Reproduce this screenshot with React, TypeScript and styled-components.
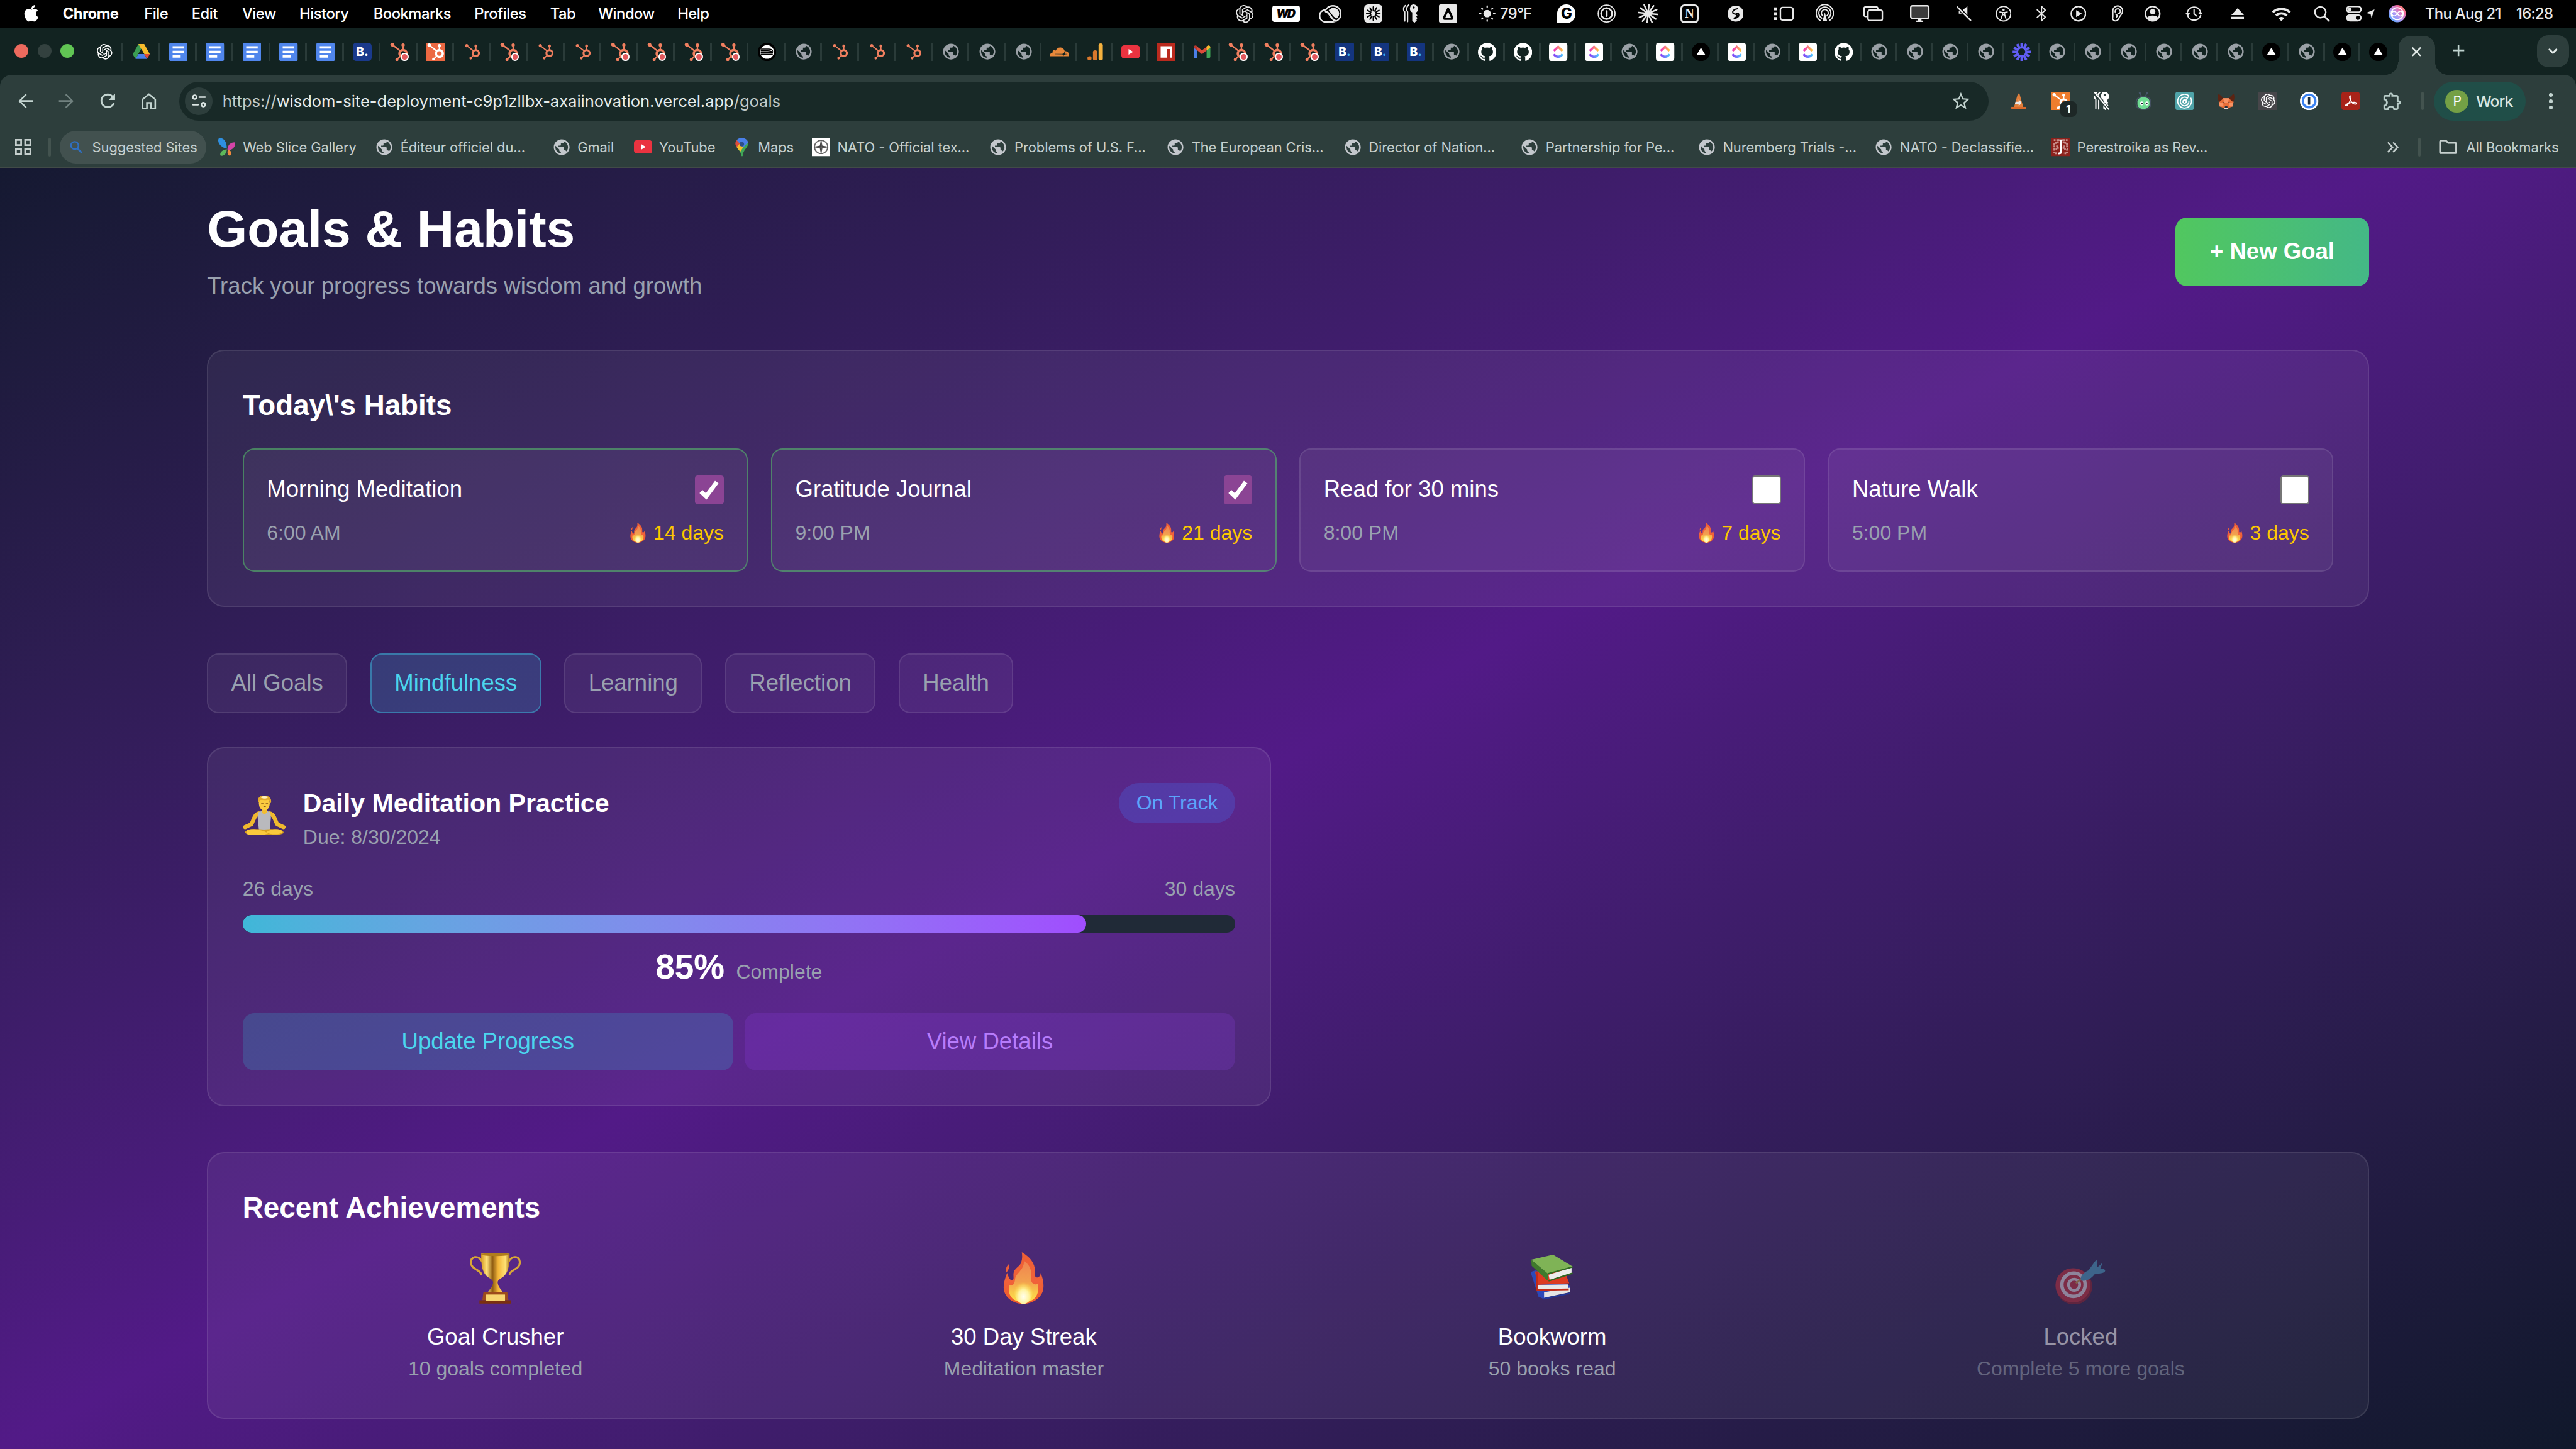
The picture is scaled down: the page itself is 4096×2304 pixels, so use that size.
import React from "react";
import styled, { createGlobalStyle, css } from "styled-components";
import { SiOpenai, SiHubspot, SiGithub, SiCloudflare } from "react-icons/si";
import { FaApple } from "react-icons/fa";
import { MdPublic, MdOutlineExtension, MdRefresh, MdStarBorder } from "react-icons/md";

/* 1rem = 10 design units on a 4480-unit-wide desktop */
const GlobalStyle = createGlobalStyle`
  html { font-size: calc(100vw / 448); }
  body { margin: 0; background: #000; overflow: hidden; }
  *, *::before, *::after { box-sizing: border-box; }
  svg { display: block; flex: none; }
`;

const UI = `Inter, "Liberation Sans", sans-serif`;
const PAGE = `"Liberation Sans", Arial, sans-serif`;
const C = { strip: "#122321", bar: "#2d3e3c", omni: "#182927", ink: "#c6d0ce", muted: "#99a1af" };

const Desktop = styled.div`
  width: 448rem;
  height: 252rem;
  display: flex;
  flex-direction: column;
  overflow: hidden;
  font-family: ${UI};
`;

/* ---------- generic icon ---------- */
const Glyph = styled.svg<{ $w: number; $h?: number }>`
  width: ${(p) => p.$w / 10}rem;
  height: ${(p) => (p.$h ?? p.$w) / 10}rem;
`;
const Slot = styled.span<{ $w: number; $c?: string }>`
  display: flex;
  flex: none;
  width: ${(p) => p.$w / 10}rem;
  color: ${(p) => p.$c ?? "inherit"};
  svg { width: 100%; height: auto; }
`;

/* ---------- macOS menu bar ---------- */
const MenuBar = styled.div`
  height: 4.8rem;
  flex: none;
  display: flex;
  align-items: center;
  padding: 0 3.7rem 0 4rem;
  background: #000;
  color: #fff;
  font-size: 2.6rem;
`;
const AppleLogo = styled(FaApple)`
  width: 2.8rem;
  height: 3.3rem;
  margin-right: 4.1rem;
  position: relative;
  top: -0.1rem;
`;
const MenuItem = styled.span<{ $w: number; $bold?: boolean }>`
  width: ${(p) => p.$w / 10}rem;
  margin-right: 4.27rem;
  white-space: nowrap;
  letter-spacing: -0.055rem;
  font-weight: ${(p) => (p.$bold ? 700 : 500)};
`;
const StatusArea = styled.div`
  margin-left: auto;
  display: flex;
  align-items: center;
  color: #e8e8e8;
`;
const Status = styled.span<{ $gap: number; $w?: number }>`
  margin-left: ${(p) => p.$gap / 10}rem;
  width: ${(p) => (p.$w ? `${p.$w / 10}rem` : "auto")};
  flex: none;
  display: flex;
  justify-content: center;
  white-space: nowrap;
  letter-spacing: -0.07rem;
  font-weight: 500;
`;
const WdBadge = styled.span`
  width: 4.8rem;
  height: 2.8rem;
  border-radius: 0.4rem;
  background: #fff;
  color: #000;
  font: italic 900 2rem/2.8rem ${UI};
  letter-spacing: -0.25rem;
  text-align: center;
  padding-right: 0.3rem;
`;
const GBadge = styled.span`
  width: 3.2rem;
  height: 3.2rem;
  border-radius: 50% 50% 50% 0;
  background: #fff;
  color: #000;
  font: 800 2.6rem/3.2rem ${UI};
  text-align: center;
  letter-spacing: 0;
`;
const NBadge = styled.span`
  width: 3.2rem;
  height: 3.2rem;
  border: 3px solid #e8e8e8;
  border-radius: 0.7rem;
  font: 700 2.2rem/2.6rem "Liberation Serif", serif;
  text-align: center;
  letter-spacing: 0;
`;

const rays = (n: number, r1: number, r2: number, o = 0) =>
  Array.from({ length: n }, (_, i) => {
    const a = o + (i * 2 * Math.PI) / n;
    return `M${16 + r1 * Math.cos(a)} ${16 + r1 * Math.sin(a)}L${16 + r2 * Math.cos(a)} ${16 + r2 * Math.sin(a)}`;
  }).join("");

const line = { fill: "none", stroke: "currentColor", strokeWidth: 2.6, strokeLinecap: "round", strokeLinejoin: "round" } as const;

const CreativeCloud = () => (
  <Glyph $w={40} $h={31} viewBox="0 0 40 31">
    <g fill="currentColor"><circle cx="24.500" cy="15.300" r="15.300" /><circle cx="12" cy="19" r="12" /><path d="M12 26h13v4.600H12z" /></g>
    <g fill="#000"><circle cx="24.500" cy="15.300" r="12.700" /><circle cx="12" cy="19" r="9.400" /><path d="M12 24h12v4H12z" /></g>
    <circle cx="25.500" cy="15" r="10" fill="currentColor" />
    <path d="M12 12c8 0 8 14 18 14" fill="none" stroke="#000" strokeWidth="7" />
    <path d="M12 11.500c7 0 9 14.500 17 16" fill="none" stroke="currentColor" strokeWidth="3.200" strokeLinecap="round" />
  </Glyph>
);
const Keys = ({ slash = false }: { slash?: boolean }) => (
  <Glyph $w={slash ? 32 : 28} $h={32} viewBox="0 0 28 32">
    <path {...line} strokeWidth={2.2} d="M5 2C1 5 1 11 4 13v16M11 1C7 4 6 10 9 13v17" />
    <path fill="currentColor" d="M19 0c5 0 8 4 8 8 0 3-1.500 5-3 6v3l2 2-2 2 2 3-2 2 1 2-4 4-4-3V14c-2-1-4-3-4-6 0-4 2-8 6-8z" />
    <circle cx="19.500" cy="5.500" r="2" fill={slash ? C.bar : "#000"} />
    {slash && <path d="M0 1l27 30" stroke={C.bar} strokeWidth="5" />}
    {slash && <path d="M1 0l26 31" stroke="#fff" strokeWidth="2.200" />}
  </Glyph>
);
const OneRing = () => (
  <Glyph $w={32} viewBox="0 0 32 32">
    <circle {...line} strokeWidth={2} cx="16" cy="16" r="14.700" />
    <circle {...line} strokeWidth={3} cx="16" cy="16" r="9.500" />
    <path {...line} strokeWidth={3.500} d="M16 12v8" />
  </Glyph>
);
const ControlCenter = () => (
  <Glyph $w={28} viewBox="0 0 28 28">
    <rect {...line} x="1.500" y="1.500" width="25" height="10" rx="5" />
    <circle cx="7" cy="6.500" r="3" fill="currentColor" />
    <rect x="0.500" y="15" width="27" height="12.500" rx="6.200" fill="currentColor" />
    <circle cx="21" cy="21.200" r="3.600" fill="#000" />
  </Glyph>
);
const Siri = () => (
  <Glyph $w={30} viewBox="0 0 30 30">
    <defs>
      <linearGradient id="siri" x1="0" y1="1" x2="1" y2="0">
        <stop offset="0" stopColor="#3aa9ff" />
        <stop offset="0.450" stopColor="#b59af5" />
        <stop offset="0.750" stopColor="#f2679a" />
        <stop offset="1" stopColor="#ffb03a" />
      </linearGradient>
    </defs>
    <circle cx="15" cy="15" r="15" fill="url(#siri)" />
    <circle cx="15" cy="15" r="10.500" fill="none" stroke="#fff" strokeWidth="2" />
    <path d="M5 15c3-6 6-5 10 0s7 6 10 0c-3-6-6-5-10 0s-7 6-10 0z" fill="none" stroke="#fff" strokeWidth="1.800" />
  </Glyph>
);

type StatusEntry = [gap: number, w: number, node: React.ReactNode];
const STATUS: StatusEntry[] = [
  [0, 32, <Slot $w={31}><SiOpenai /></Slot>],
  [32, 48, <WdBadge>WD</WdBadge>],
  [33, 40, <CreativeCloud />],
  [39, 32, <Glyph $w={32} viewBox="0 0 32 32"><rect width="32" height="32" rx="7" fill="currentColor" /><path d={rays(12, 5, 11.5)} stroke="#000" strokeWidth="2.400" strokeLinecap="round" /></Glyph>],
  [35, 28, <Keys />],
  [35, 32, <Glyph $w={32} viewBox="0 0 32 32"><rect width="32" height="32" rx="3" fill="currentColor" /><path d="M16 8l7 15c.4 1-.2 2-1 2H10c-.8 0-1.400-1-1-2z" fill="none" stroke="#000" strokeWidth="4" strokeLinejoin="round" /></Glyph>],
  [37, 30, <Glyph $w={30} viewBox="0 0 32 32"><circle cx="16" cy="16" r="7" fill="currentColor" /><path d={rays(8, 12, 14)} {...line} /></Glyph>],
  [7, 56, "79°F"],
  [44, 32, <GBadge>G</GBadge>],
  [38, 32, <OneRing />],
  [40, 32, <Glyph $w={34} viewBox="0 0 32 32"><path d={rays(12, 1, 15.5, 0.1)} {...line} /></Glyph>],
  [40, 32, <NBadge>N</NBadge>],
  [50, 28, <Glyph $w={28} viewBox="0 0 28 28"><circle cx="14" cy="14" r="14" fill="currentColor" /><path d="M17 5.500c-6 1-8.500 4-8 7 .5 3.500 8 1 7.500 5-.2 2-2 3-4 3.200M11.500 22.500c6-1 8.500-4 8-7-.3-2-2.500-2.500-4.500-2.300" fill="none" stroke="#000" strokeWidth="2.200" strokeLinecap="round" /></Glyph>],
  [52, 36, <Glyph $w={36} $h={26} viewBox="0 0 36 26"><rect {...line} x="12" y="2" width="22" height="22" rx="4" /><path fill="currentColor" d="M1 2h5v5H1zM1 10.500h5v5H1zM1 19h5v5H1z" /></Glyph>],
  [37, 32, <Glyph $w={32} viewBox="0 0 32 32"><g {...line} strokeWidth={2.200}><path d="M8 28A15 15 0 1 1 24 28M10.500 24A10.500 10.500 0 1 1 21.500 24M12.500 20a6 6 0 1 1 7 0" /></g><path fill="currentColor" d="M16 14l4 15h-8z" /></Glyph>],
  [50, 36, <Glyph $w={36} $h={28} viewBox="0 0 36 28"><path {...line} d="M8 19H5a3 3 0 0 1-3-3V5a3 3 0 0 1 3-3h18a3 3 0 0 1 3 3v1" /><rect {...line} x="9" y="8" width="25" height="18" rx="3" /></Glyph>],
  [46, 36, <Glyph $w={34} $h={30} viewBox="0 0 34 30"><rect x="1.300" y="1.300" width="31.400" height="22" rx="3" fill="#3c3c3c" stroke="currentColor" strokeWidth="2.600" /><path fill="currentColor" d="M14 24h6v3h3v2.500H11V27h3z" /></Glyph>],
  [44, 28, <Glyph $w={28} viewBox="0 0 28 28"><path fill="currentColor" d="M20 1v22L11 14H5V9h5z" /><path d="M3 2l22 24" stroke="#000" strokeWidth="6" /><path {...line} d="M2.500 2.500l23 23" /></Glyph>],
  [41, 28, <Glyph $w={28} viewBox="0 0 28 28"><circle {...line} strokeWidth={2.200} cx="14" cy="14" r="12.700" /><circle cx="14" cy="7.500" r="2" fill="currentColor" /><path {...line} strokeWidth={2} d="M7.500 11l4.500 1v4l-2 6M20.500 11L16 12v4l2 6M12.500 12h3v4h-3z" /></Glyph>],
  [42, 20, <Glyph $w={20} $h={30} viewBox="0 0 20 30"><path {...line} strokeWidth={2.200} d="M2.500 8.500L16.500 21 10 27.500v-25L16.500 9 2.500 21.500" /></Glyph>],
  [40, 28, <Glyph $w={28} viewBox="0 0 28 28"><circle {...line} cx="14" cy="14" r="12.500" /><path fill="currentColor" d="M10 8l10 6-10 6z" /></Glyph>],
  [41, 24, <Glyph $w={24} $h={30} viewBox="0 0 24 30"><path {...line} strokeWidth={2.300} d="M5 20V10a8.500 8.500 0 0 1 17 0c0 7-5 8-6 12-1 5-8 8-11 3-1-2 0-3 0-5M9 12c0-7 9-7 9-1 0 3-2 4-4 4M10 16c3 1 3 4 1 5" /></Glyph>],
  [37, 28, <Glyph $w={28} viewBox="0 0 28 28"><circle {...line} cx="14" cy="14" r="12.500" /><circle cx="14" cy="10.500" r="4.800" fill="currentColor" /><path fill="currentColor" d="M4.500 21c3-5 16-5 19 0-4 6-15 6-19 0z" /></Glyph>],
  [42, 32, <Glyph $w={30} viewBox="0 0 30 30"><path {...line} strokeWidth={2.300} d="M3.500 12A12 12 0 0 1 26 11M26.500 18A12 12 0 0 1 4 19M15 8v7l4 4" /><path fill="currentColor" d="M0 14l4 6 4-6zM22 16l4-6 4 6z" /></Glyph>],
  [47, 24, <Glyph $w={24} $h={20} viewBox="0 0 24 20"><path fill="currentColor" d="M12 0l11 12H1zM1 15h22v4.500H1z" /></Glyph>],
  [48, 34, <Glyph $w={34} $h={25} viewBox="0 0 34 25"><g {...line} strokeWidth={4.200} strokeLinecap="butt"><path d="M2 9.500a21.500 21.500 0 0 1 30 0M7.500 15a14 14 0 0 1 19 0" /></g><path fill="currentColor" d="M17 25l-5-5.500a7.500 7.500 0 0 1 10 0z" /></Glyph>],
  [39, 28, <Glyph $w={28} viewBox="0 0 28 28"><circle {...line} cx="11.500" cy="11.500" r="9.500" /><path {...line} strokeWidth={3} d="M18.500 18.500l8 8" /></Glyph>],
  [28, 28, <ControlCenter />],
  [7, 14, <Glyph $w={15} viewBox="0 0 14 14"><path fill="currentColor" d="M14 0L9 14 7.500 7.500 0 6z" /></Glyph>],
  [25, 30, <Siri />],
];
const MENU: [string, number][] = [["Chrome", 99], ["File", 40], ["Edit", 45], ["View", 57], ["History", 86], ["Bookmarks", 133], ["Profiles", 89], ["Tab", 41], ["Window", 95], ["Help", 54]];

/* ---------- browser tab strip ---------- */
const TabStrip = styled.div`
  height: 8.2rem;
  flex: none;
  display: flex;
  align-items: center;
  background: ${C.strip};
`;
const Lights = styled.div`
  width: 15rem;
  padding-left: 2.55rem;
  display: flex;
  gap: 1.6rem;
  flex: none;
`;
const Light = styled.i<{ $c: string }>`
  width: 2.4rem;
  height: 2.4rem;
  border-radius: 50%;
  background: ${(p) => p.$c};
`;
const Tab = styled.div<{ $w: number; $last?: boolean }>`
  width: ${(p) => p.$w / 10}rem;
  height: 3.2rem;
  margin-top: 0.2rem;
  flex: none;
  display: flex;
  align-items: center;
  justify-content: center;
  border-right: 3px solid ${(p) => (p.$last ? "transparent" : "#2a3b39")};
  padding-left: 3px;
`;
const ActiveTab = styled.div`
  position: relative;
  align-self: flex-end;
  width: 6.4rem;
  height: 6.8rem;
  margin-left: 0.4rem;
  flex: none;
  display: flex;
  align-items: center;
  justify-content: center;
  padding-bottom: 1.2rem;
  border-radius: 2rem 2rem 0 0;
  background: ${C.bar};
  color: #e3ebe9;
  &::before, &::after {
    content: "";
    position: absolute;
    bottom: 0;
    width: 2.2rem;
    height: 2.2rem;
  }
  &::before { right: 100%; background: radial-gradient(circle at 0 0, transparent 2.15rem, ${C.bar} 2.2rem); }
  &::after { left: 100%; background: radial-gradient(circle at 100% 0, transparent 2.15rem, ${C.bar} 2.2rem); }
`;
const NewTab = styled.div`
  width: 8.2rem;
  padding-bottom: 0.2rem;
  display: flex;
  justify-content: center;
  color: #c0d4d0;
`;
const TabSearch = styled.div`
  margin-left: auto;
  margin-right: 1.2rem;
  width: 5.6rem;
  height: 5.6rem;
  border-radius: 2rem;
  background: ${C.bar};
  color: #e3ebe9;
  display: flex;
  align-items: center;
  justify-content: center;
`;
const HubWrap = styled.span`
  position: relative;
  display: flex;
  width: 3.2rem;
  color: #f07f5f;
  svg { width: 3.2rem; height: 3.2rem; }
  &::after {
    content: "";
    position: absolute;
    right: -0.1rem;
    bottom: 0;
    width: 1.4rem;
    height: 1.4rem;
    border-radius: 50%;
    background: #e2585d;
    border: 2px solid #fff;
  }
`;
const Tile = styled.span<{ $bg: string; $r?: number; $c?: string }>`
  width: 3.2rem;
  height: 3.2rem;
  flex: none;
  border-radius: ${(p) => (p.$r ?? 0) / 10}rem;
  background: ${(p) => p.$bg};
  color: ${(p) => p.$c ?? "#fff"};
  display: flex;
  align-items: center;
  justify-content: center;
`;
const BLetter = styled.b`
  font: 800 2.1rem/1 ${UI};
  color: #fff;
  i { font-style: normal; color: #39a9f0; }
`;

const Docs = () => (
  <Glyph $w={32} viewBox="0 0 32 32"><rect width="32" height="32" rx="3" fill="#5086ec" /><path fill="#fff" d="M6 6h20v4H6zM6 14h20v4H6zM6 22h14v4H6z" /></Glyph>
);
const Drive = () => (
  <Glyph $w={30} $h={27} viewBox="0 0 30 27">
    <path fill="#3b9c52" d="M10 0h10L5 26 0 18z" />
    <path fill="#f6bb2c" d="M10 0h10l10 18H20z" />
    <path fill="#4a7fe8" d="M5 26l5-8.500h10L25 26z" />
    <path fill="#dd4b3a" d="M20 17.500h10L25 26z" />
    <path fill={C.strip} d="M15 8.500l5.200 9H9.800z" />
  </Glyph>
);
const Booking = ({ alt = false }: { alt?: boolean }) => (
  <Tile $bg={alt ? "#14357f" : "#1a3a8c"} $r={alt ? 2 : 6}><BLetter>B{alt ? <i>.</i> : "."}</BLetter></Tile>
);
const Globe = ({ c = "#9aa0a6" }: { c?: string }) => <Slot $w={33} $c={c}><MdPublic /></Slot>;
const Hub = () => <Slot $w={27} $c="#f07f5f"><SiHubspot /></Slot>;
const HubDot = () => <HubWrap><SiHubspot /></HubWrap>;
const YouTubeIcon = () => (
  <Glyph $w={32} $h={23} viewBox="0 0 32 23"><rect width="32" height="23" rx="5" fill="#ea3340" /><path fill="#fff" d="M12.500 6.500l8 5-8 5z" /></Glyph>
);
const ClickUp = () => (
  <Glyph $w={32} viewBox="0 0 32 32">
    <defs>
      <linearGradient id="cu1"><stop offset="0" stopColor="#f02fc2" /><stop offset="1" stopColor="#ffc53d" /></linearGradient>
      <linearGradient id="cu2"><stop offset="0" stopColor="#8a3df5" /><stop offset="1" stopColor="#4fc5ff" /></linearGradient>
    </defs>
    <rect width="32" height="32" rx="5" fill="#fff" />
    <path d="M8.500 14L16 7l7.500 7" fill="none" stroke="url(#cu1)" strokeWidth="4" />
    <path d="M8.500 20c4 6 11 6 15 0" fill="none" stroke="url(#cu2)" strokeWidth="4" />
  </Glyph>
);
const Vercel = () => (
  <Glyph $w={32} viewBox="0 0 32 32"><circle cx="16" cy="16" r="16" fill="#000" /><path fill="#fff" d="M16 8.500l8 13.500H8z" /></Glyph>
);
const Gmail = () => (
  <Glyph $w={29} $h={22} viewBox="0 0 29 22">
    <path fill="#4a7fe8" d="M0 4h6.500v18H2a2 2 0 0 1-2-2z" />
    <path fill="#3fa557" d="M22.500 4H29v16a2 2 0 0 1-2 2h-4.500z" />
    <path fill="#dd4b3a" d="M3 0l11.500 8.700L26 0l-3.500 9-8 6.500-8-6.500z" />
    <path fill="#b8372c" d="M0 3.500C0 .5 3-.8 5.500 1l1 .8V9L0 4.500z" />
    <path fill="#f6bb2c" d="M29 3.500C29 .5 26-.8 23.500 1l-1 .8V9L29 4.500z" />
  </Glyph>
);
const Analytics = () => (
  <Glyph $w={27} $h={30} viewBox="0 0 27 30"><circle cx="3.700" cy="26" r="3.700" fill="#d9782c" /><rect x="9.700" y="12" width="7.400" height="18" rx="3.500" fill="#d9782c" /><rect x="19.500" y="0" width="7.400" height="30" rx="3.500" fill="#f4b13e" /></Glyph>
);
const Npm = () => (
  <Glyph $w={32} viewBox="0 0 32 32"><rect width="32" height="32" fill="#ba2a1e" /><path fill="#fff" d="M6 6h20v20h-4V11h-5v15H6z" /></Glyph>
);
const Striped = () => (
  <Glyph $w={32} viewBox="0 0 32 32"><circle cx="16" cy="16" r="16" fill="#000" /><circle cx="16" cy="16" r="12" fill="#fff" /><path d="M5 11h14q6 0 7 4M5 14h12q8 0 9 4M5 17h20M5 20h21" fill="none" stroke="#000" strokeWidth="1.500" /></Glyph>
);
const Burst = () => (
  <Glyph $w={32} viewBox="0 0 32 32"><path d={rays(12, 6, 15.8)} stroke="#615ef5" strokeWidth="4.400" /></Glyph>
);

const ICONS: Record<string, () => React.ReactNode> = {
  o: () => <Slot $w={27} $c="#fff"><SiOpenai /></Slot>,
  d: () => <Drive />,
  D: () => <Docs />,
  B: () => <Booking />,
  b: () => <Booking alt />,
  H: () => <HubDot />,
  T: () => <Tile $bg="#ec6842"><Slot $w={30}><SiHubspot /></Slot></Tile>,
  h: () => <Hub />,
  s: () => <Striped />,
  g: () => <Globe />,
  C: () => <Slot $w={34} $c="#e8883a"><SiCloudflare /></Slot>,
  a: () => <Analytics />,
  y: () => <YouTubeIcon />,
  n: () => <Npm />,
  m: () => <Gmail />,
  G: () => <Slot $w={32} $c="#fff"><SiGithub /></Slot>,
  c: () => <ClickUp />,
  v: () => <Vercel />,
  p: () => <Burst />,
};
const WIDE_TABS = "odDDDDDBHThHhhHHHHsghhhgg";
const NARROW_TABS = "gCaynmHHHbbbgGGccgcvcgcGggggpggggggvgvv";

/* ---------- toolbar ---------- */
const Chrome = styled.div`
  height: 16.2rem;
  flex: none;
  background: ${C.strip};
`;
const ChromeBody = styled.div`
  height: 100%;
  border-radius: 2rem 2rem 0 0;
  background: ${C.bar};
  border-bottom: 2px solid #414b47;
  display: flex;
  flex-direction: column;
`;
const Toolbar = styled.div`
  height: 9.2rem;
  display: flex;
  align-items: center;
  padding: 0 3.2rem 0 2.9rem;
  color: #c3d4d0;
`;
const NavButtons = styled.div`
  width: 28.3rem;
  display: flex;
  align-items: center;
  gap: 3.8rem;
`;
const Omnibox = styled.div`
  width: 314.6rem;
  height: 6.8rem;
  border-radius: 3.4rem;
  background: ${C.omni};
  display: flex;
  align-items: center;
  padding: 0 2.9rem 0 1rem;
`;
const SiteChip = styled.span`
  width: 4.8rem;
  height: 4.8rem;
  border-radius: 50%;
  background: ${C.bar};
  color: #dbe5e3;
  display: flex;
  align-items: center;
  justify-content: center;
`;
const Url = styled.span`
  flex: 1;
  margin-left: 1.7rem;
  font-size: 2.8rem;
  letter-spacing: -0.005rem;
  color: #c1cac8;
  white-space: nowrap;
  b { font-weight: 400; color: #e6eceb; }
`;
const Extensions = styled.div`
  display: flex;
  align-items: center;
  margin-left: 3.7rem;
  gap: 4.02rem;
`;
const ExtCell = styled.span`
  position: relative;
  width: 3.2rem;
  height: 3.2rem;
  display: flex;
  align-items: center;
  justify-content: center;
  color: #fff;
`;
const Count = styled.b`
  position: absolute;
  left: 1.6rem;
  top: 1.6rem;
  width: 2.8rem;
  height: 2.8rem;
  border-radius: 0.8rem;
  background: #1d2726;
  color: #fff;
  font: 700 1.8rem/2.8rem ${UI};
  text-align: center;
`;
const Rule = styled.i<{ $ml: number; $mr: number }>`
  width: 4px;
  height: 3.2rem;
  flex: none;
  border-radius: 2px;
  background: #43534f;
  margin: 0 ${(p) => p.$mr / 10}rem 0 ${(p) => p.$ml / 10}rem;
`;
const Profile = styled.div`
  width: 16rem;
  height: 6.8rem;
  border-radius: 3.4rem;
  background: #204e48;
  display: flex;
  align-items: center;
  padding-left: 2rem;
  gap: 1.3rem;
  color: #d8e6e2;
  font-size: 2.7rem;
  font-weight: 500;
  letter-spacing: -0.1rem;
`;
const Avatar = styled.span`
  width: 4rem;
  height: 4rem;
  border-radius: 50%;
  background: #74a045;
  color: #fff;
  font: 400 2.3rem/4rem ${UI};
  text-align: center;
`;
const MoreDots = styled.span`
  margin-left: auto;
  margin-right: 0.9rem;
  display: flex;
  flex-direction: column;
  gap: 0.5rem;
  i { width: 0.6rem; height: 0.6rem; border-radius: 50%; background: #c3d4d0; }
`;

/* ---------- bookmarks ---------- */
const Bookmarks = styled.div`
  height: 6.8rem;
  display: flex;
  align-items: center;
  padding: 0 3rem 0 2.6rem;
  color: ${C.ink};
  font-size: 2.4rem;
  letter-spacing: -0.01rem;
`;
const BookmarkList = styled.div`
  display: flex;
  gap: 0.8rem;
`;
const Bookmark = styled.div<{ $w: number; $on?: boolean }>`
  width: ${(p) => p.$w / 10}rem;
  height: 5.6rem;
  flex: none;
  border-radius: 2.8rem;
  background: ${(p) => (p.$on ? "#42514f" : "transparent")};
  display: flex;
  align-items: center;
  padding-left: 1.2rem;
  gap: 1.2rem;
  white-space: nowrap;
`;
const IconBox = styled.span`
  width: 3.2rem;
  height: 3.2rem;
  flex: none;
  display: flex;
  align-items: center;
  justify-content: center;
`;
const AllBookmarks = styled.div`
  display: flex;
  align-items: center;
  gap: 1.5rem;
  white-space: nowrap;
`;
const Overflow = styled.div`
  margin-left: auto;
`;

const Butterfly = () => (
  <Glyph $w={32} viewBox="0 0 32 32">
    <path fill="#2f8fe0" d="M2 1c8-2 14 5 14 18C7 18-2 8 2 1z" />
    <path fill="#d544a8" d="M30 8c-8 0-13 5-13 14 9 0 15-7 13-14z" />
    <path fill="#5db85a" d="M5 31c-2-6 4-10 11-11 0 7-5 13-11 11z" />
    <path fill="#f08a3c" d="M22 31c4-3 2-9-4-10-2 5 0 11 4 10z" />
  </Glyph>
);
const MapPin = () => (
  <Glyph $w={23} $h={32} viewBox="0 0 23 32">
    <path fill="#3fa557" d="M22.500 8c2 8-9 12-9.500 24h-2C10 26 7 22 4 18.500z" />
    <path fill="#f6bb2c" d="M8 8l7 7-6 9c-2-2-5-5-6.500-8z" />
    <path fill="#dd4b3a" d="M2.500 4L9 9l-6.500 7C-.5 12-.3 7.500 2.500 4z" />
    <path fill="#4a7fe8" d="M2.500 4C8-2 20-1 22.500 8L14 17z" />
    <circle cx="11.500" cy="11" r="4" fill="#2d4f8a" />
  </Glyph>
);
const Nato = () => (
  <Glyph $w={32} viewBox="0 0 32 32"><rect width="32" height="32" fill="#fff" /><circle cx="16" cy="16" r="11.500" fill="none" stroke="#666" strokeWidth="2" /><path fill="#444" d="M16 1l2.200 12.800L31 16l-12.800 2.200L16 31l-2.200-12.800L1 16l12.800-2.200z" /><path d="M16 7v18M7 16h18" stroke="#fff" strokeWidth="0.800" /></Glyph>
);
const Emblem = () => (
  <Glyph $w={32} viewBox="0 0 32 32"><rect width="32" height="32" fill="#8c211c" /><path d="M4 4h7v5H5v6h6v5H5v7h7M28 4h-7v5h6v6h-6v5h6v7h-7" fill="none" stroke="#c98f8a" strokeWidth="3.200" strokeDasharray="3 1.500" /><path d="M12 3h9v2h-2.500v19q0 5-6.500 5v-3q3 0 3-3V5h-3z" fill="#fff" /></Glyph>
);
const Magnifier = () => (
  <Glyph $w={22} viewBox="0 0 22 22"><circle cx="8.500" cy="8" r="6.500" fill="none" stroke="#2f6fc0" strokeWidth="2.600" /><path d="M13 13l7 7" stroke="#2f6fc0" strokeWidth="3" strokeLinecap="round" /></Glyph>
);
const BmGlobe = () => <Globe c="#c3c7cc" />;
const BOOKMARKS: [number, React.ReactNode, string][] = [
  [254, <Magnifier />, "Suggested Sites"],
  [266, <Butterfly />, "Web Slice Gallery"],
  [300, <BmGlobe />, "Éditeur officiel du..."],
  [134, <BmGlobe />, "Gmail"],
  [164, <YouTubeIcon />, "YouTube"],
  [130, <MapPin />, "Maps"],
  [300, <Nato />, "NATO - Official tex..."],
  [300, <BmGlobe />, "Problems of U.S. F..."],
  [300, <BmGlobe />, "The European Cris..."],
  [300, <BmGlobe />, "Director of Nation..."],
  [300, <BmGlobe />, "Partnership for Pe..."],
  [300, <BmGlobe />, "Nuremberg Trials -..."],
  [300, <BmGlobe />, "NATO - Declassifie..."],
  [300, <Emblem />, "Perestroika as Rev..."],
];

const Cone = () => (
  <Glyph $w={28} $h={29} viewBox="0 0 28 29"><path fill="#e07f3c" d="M12.500 1.500q1.500-1.500 3 0L22 24h4.500v4h-25v-4H6z" /><path fill="#d9692a" d="M1.500 24h25v4h-25z" /><path fill="#e8e8e8" d="M8.500 15H14v-4l5.500 6-5.500 5.500V19H7.500z" /></Glyph>
);
const Robot = () => (
  <Glyph $w={29} $h={32} viewBox="0 0 29 32"><path d="M8.500 2l3 7M20.500 2l-3 7" stroke="#47566a" strokeWidth="1.800" /><circle cx="8" cy="2" r="1.700" fill="#47566a" /><circle cx="21" cy="2" r="1.700" fill="#47566a" /><path d="M1.500 20C1.500 12 7 8 14.500 8s13 4 13 12-5 10.800-13 10.800S1.500 28 1.500 20z" fill="none" stroke="#434f60" strokeWidth="2" /><path fill="#70dc94" d="M4 17c0-5 4-7.500 10.500-7.500S25 12 25 17v5c0 5-5 8-10.500 8S4 27 4 22z" /><ellipse cx="11.500" cy="20" rx="3" ry="3.400" fill="#fff" /><ellipse cx="20.500" cy="20" rx="3" ry="3.400" fill="#fff" /><circle cx="12" cy="20" r="1.400" fill="#223" /><circle cx="20" cy="20" r="1.400" fill="#223" /></Glyph>
);
const Gauge = () => (
  <Glyph $w={32} viewBox="0 0 32 32"><rect width="32" height="32" rx="4" fill="#4fa3a8" /><g fill="none" stroke="#fff" strokeWidth="2"><path d="M23 6.500A12 12 0 1 0 28 16c0-2-.4-4-1.400-5.600" /><path d="M20 10.500A7.500 7.500 0 1 0 23.500 16" /><circle cx="16" cy="17" r="2.800" /><path d="M18 15l5-7" /></g></Glyph>
);
const Fox = () => (
  <Glyph $w={30} $h={29} viewBox="0 0 30 29">
    <path fill="#ea6f38" d="M9.500 9h11L28 15l-1.500 8-6 2.500L17.500 28h-5l-3-2.500-6-2.500L2 15z" />
    <path fill="#5c2413" d="M2 1l8.500 8L3 15.500C0 11 0 5 2 1zM28 1l-8.500 8 7.500 6.500C30 11 30 5 28 1z" />
    <path fill="#f79264" d="M9.500 9h11l-3 8h-5zM2.500 16l7 1 1 6-6.500.5zM27.500 16l-7 1-1 6 6.500.5z" />
    <path fill="#26303c" d="M8 15l4.500 1.500V18zM22 15l-4.500 1.500V18zM13 22.500h4l.5 3h-5z" />
    <path fill="#ece4e0" d="M11.500 25.500h7L17 29h-4z" />
  </Glyph>
);
const OnePassword = () => (
  <Glyph $w={32} viewBox="0 0 32 32"><circle cx="16" cy="16" r="16" fill="#fff" /><circle cx="16" cy="16" r="11" fill="#fff" stroke="#3b82f0" strokeWidth="3.800" /><rect x="14" y="9.500" width="4" height="13" rx="1" fill="#1a2a3a" /></Glyph>
);
const Acrobat = () => (
  <Glyph $w={32} viewBox="0 0 32 32"><rect width="32" height="32" rx="5" fill="#a82318" /><path d="M15.500 7c-2 0-1.500 4 .5 8 2 4 5 6.500 8 6.500s2.500-3-1.500-3.200c-5-.3-12 1.700-14.500 4.200-1.800 1.800.5 3 2.500.5 2.500-3 5.500-9 6-12 .4-2.500 0-4-1-4z" fill="none" stroke="#fff" strokeWidth="1.900" /></Glyph>
);

/* ---------- page ---------- */
const Page = styled.main`
  flex: 1;
  padding: 5.6rem 36rem 0;
  display: flex;
  flex-direction: column;
  font-family: ${PAGE};
  font-size: 4rem;
  line-height: 6rem;
  color: #fff;
  background: linear-gradient(to bottom right in oklab, #10182b, #521a87, #10182b) 0 100% / 100% 240.6rem no-repeat;
`;
const PageHeader = styled.header`
  display: flex;
  align-items: center;
  justify-content: space-between;
  margin-bottom: 8rem;
`;
const PageTitle = styled.h1`
  margin: 0 0 2rem;
  font-size: 9rem;
  line-height: 10rem;
  font-weight: 700;
`;
const Lead = styled.p`
  margin: 0;
  color: ${C.muted};
`;
const NewGoal = styled.button`
  border: 0;
  padding: 3rem 6rem;
  border-radius: 2rem;
  color: #fff;
  font: 700 4rem/6rem ${PAGE};
  background: linear-gradient(to right, #51c75f, #44b886);
`;
const Panel = styled.section<{ $w?: number; $mb?: number }>`
  width: ${(p) => (p.$w ? `${p.$w / 10}rem` : "100%")};
  margin-bottom: ${(p) => (p.$mb ?? 0) / 10}rem;
  padding: calc(6.2rem - 2px);
  border: 2px solid rgba(255, 255, 255, 0.1);
  border-radius: 3rem;
  background: rgba(255, 255, 255, 0.055);
`;
const PanelTitle = styled.h2`
  margin: 0 0 4rem;
  font-size: 5rem;
  line-height: 7rem;
  font-weight: 700;
`;
const FourCols = styled.div`
  display: grid;
  grid-template-columns: repeat(4, 1fr);
  gap: 4rem;
`;
const Habit = styled.article<{ $done: boolean }>`
  padding: calc(4.2rem - 2px);
  border: 2px solid ${(p) => (p.$done ? "rgba(84, 196, 104, 0.55)" : "rgba(255, 255, 255, 0.1)")};
  border-radius: 2rem;
  background: rgba(255, 255, 255, 0.05);
`;
const Spread = styled.div<{ $mb?: number }>`
  display: flex;
  align-items: center;
  justify-content: space-between;
  margin-bottom: ${(p) => (p.$mb ?? 0) / 10}rem;
`;
const Small = styled.span<{ $c?: string }>`
  font-size: 3.5rem;
  line-height: 5rem;
  color: ${(p) => p.$c ?? C.muted};
`;
const Streak = styled(Small)`
  display: flex;
  align-items: center;
  gap: 1.3rem;
  color: #fcc800;
`;
const Check = styled.span<{ $on: boolean }>`
  width: 5rem;
  height: 5rem;
  border-radius: 0.5rem;
  display: flex;
  ${(p) => (p.$on ? css`background: #8b4494;` : css`background: #fff; border: 2px solid #767676;`)}
`;
const Filters = styled.nav`
  display: flex;
  gap: 4rem;
  margin-bottom: 6rem;
`;
const Filter = styled.button<{ $on?: boolean }>`
  padding: calc(2.2rem - 2px) calc(4.2rem - 2px);
  border-radius: 2rem;
  font: 400 4rem/6rem ${PAGE};
  ${(p) =>
    p.$on
      ? css`color: #4bd5ee; background: rgba(60, 184, 219, 0.2); border: 2px solid rgba(60, 184, 219, 0.5);`
      : css`color: ${C.muted}; background: rgba(255, 255, 255, 0.05); border: 2px solid rgba(255, 255, 255, 0.1);`}
`;
const GoalHead = styled.div`
  display: flex;
  align-items: flex-start;
  justify-content: space-between;
  margin-bottom: 4rem;
`;
const GoalIdentity = styled.div`
  display: flex;
  align-items: center;
  gap: 3rem;
`;
const GoalTitle = styled.h3`
  margin: 0;
  font-size: 4.5rem;
  line-height: 7rem;
  font-weight: 700;
`;
const GoalIcon = styled.div`
  padding-bottom: 0.8rem;
`;
const Stack = styled.div`
  display: flex;
  flex-direction: column;
`;
const Pill = styled.span`
  padding: 1rem 3rem;
  border-radius: 3.5rem;
  font-size: 3.5rem;
  line-height: 5rem;
  color: #5ba4fb;
  background: rgba(66, 125, 255, 0.24);
`;
const Track = styled.div`
  height: 3rem;
  border-radius: 1.5rem;
  background: #202a37;
  overflow: hidden;
`;
const Fill = styled.div`
  height: 100%;
  border-radius: 1.5rem;
  background: linear-gradient(to right in oklab, #3fb7d8, #a04dfe);
`;
const Percent = styled.div`
  margin: 2rem 0 4rem;
  height: 8rem;
  display: flex;
  justify-content: center;
  align-items: baseline;
  gap: 2rem;
  line-height: 8rem;
  b { font-size: 6rem; }
`;
const Actions = styled.div`
  display: grid;
  grid-template-columns: 1fr 1fr;
  gap: 2rem;
`;
const Action = styled.button<{ $bg: string; $c: string }>`
  border: 0;
  padding: 2rem;
  border-radius: 2rem;
  font: 400 4rem/6rem ${PAGE};
  background: ${(p) => p.$bg};
  color: ${(p) => p.$c};
`;
const Achievement = styled.article<{ $locked?: boolean }>`
  display: flex;
  flex-direction: column;
  align-items: center;
  opacity: ${(p) => (p.$locked ? 0.5 : 1)};
`;
const Medal = styled.div<{ $top: number }>`
  height: 12rem;
  padding-top: ${(p) => p.$top / 10}rem;
`;

/* ---------- emoji drawings ---------- */
const Flame = ({ w, h }: { w: number; h: number }) => (
  <Glyph $w={w} $h={h} viewBox="0 0 72 90" preserveAspectRatio="none">
    <defs>
      <linearGradient id="fl1" x1="0" y1="0" x2="0" y2="1"><stop offset="0" stopColor="#ee5f34" /><stop offset="0.550" stopColor="#f0623a" /><stop offset="1" stopColor="#ec5a2c" /></linearGradient>
      <linearGradient id="fl2" x1="0" y1="0" x2="0" y2="1"><stop offset="0" stopColor="#f08350" /><stop offset="0.500" stopColor="#f2a04f" /><stop offset="0.750" stopColor="#f8c64a" /><stop offset="1" stopColor="#ffe04a" /></linearGradient>
      <radialGradient id="fl3" cx="0.500" cy="0.700" r="0.600"><stop offset="0" stopColor="#fffef0" /><stop offset="0.500" stopColor="#fff3a0" /><stop offset="1" stopColor="#ffe14d" stopOpacity="0" /></radialGradient>
    </defs>
    <path fill="url(#fl1)" d="M33 0c16 9 25 22 23 37-1 7 4 9 8 5 2-2 2-3 2-6 4 8 6 18 5 27-1 14-17 27-35 27S2 79 1 62c0-10 3-18 6-26 2 5 4 13 9 13 5-1 0-10 4-17 3-5 8-7 11-12 3-7 3-13 2-20z" />
    <path fill="#ec5f38" d="M11 20c-5 4-7 9-6 16 4-4 7-9 6-16z" />
    <path fill="url(#fl2)" d="M37 15c11 8 14 18 12 30 0 9 6 13 12 10 4 20-6 32-25 32S7 75 11 57c5 3 9-1 10-9 1-12 16-16 16-33z" />
    <ellipse cx="36" cy="69" rx="16" ry="21" fill="url(#fl3)" />
  </Glyph>
);
const Trophy = () => (
  <Glyph $w={89} $h={90} viewBox="0 0 90 90">
    <defs>
      <linearGradient id="tr"><stop offset="0" stopColor="#d59a22" /><stop offset="0.200" stopColor="#ffe27a" /><stop offset="0.400" stopColor="#8f5c12" /><stop offset="0.600" stopColor="#f4b73a" /><stop offset="0.850" stopColor="#ffdf72" /><stop offset="1" stopColor="#a66f16" /></linearGradient>
    </defs>
    <path d="M21 15C14 4 2 7 2 18c0 11 17 13 18 20M69 15C76 4 88 7 88 18c0 11-17 13-18 20" fill="none" stroke="#d9a636" strokeWidth="3.500" strokeLinecap="round" />
    <path fill="url(#tr)" d="M20 2h50c0 20-1 36-16 44-5 3-6 6-4 11 1 5 6 8 8 13H32c2-5 7-8 8-13 2-5 1-8-4-11C21 38 20 22 20 2z" />
    <ellipse cx="45" cy="3.500" rx="25" ry="3" fill="#b07c1c" />
    <path fill="#9c4a1c" d="M24 70h42l2 14H22z" />
    <path fill="#7a2f10" d="M17 84h56v6H17z" />
    <rect x="28" y="74" width="34" height="11" fill="#f7d571" />
  </Glyph>
);
const Books = () => (
  <Glyph $w={78} $h={80} viewBox="0 0 80 80">
    <path fill="#2c49b8" d="M2 31l9-3 61 28v6L25 79l-9-4z" /><path fill="#e4e4e4" d="M26 67l46-8v8L26 77z" /><path d="M25 79l47-10" stroke="#21389a" strokeWidth="2.500" />
    <path fill="#dc3b22" d="M10 30l52-2 9 23-57 3z" /><path fill="#e9e9e9" d="M15 54l54-1v9l-54 1z" /><path d="M13 30v33l57-1" fill="none" stroke="#c22c18" strokeWidth="3" />
    <path fill="#7fb356" d="M3 9L42 0l35 21-44 14z" /><path fill="#3f7a2c" d="M3 9l30 25v13L4 20z" /><path fill="#ececec" d="M34 36l41-13v10L36 45z" /><path d="M33 34l44-12M34 47l43-14" stroke="#2f6a20" strokeWidth="2.500" />
  </Glyph>
);
const Dart = () => (
  <Glyph $w={90} $h={77} viewBox="0 0 88 76">
    <ellipse cx="33" cy="46" rx="31" ry="31" transform="rotate(15 33 46)" fill="#8e2430" />
    <ellipse cx="31" cy="44" rx="30" ry="29.500" fill="#c8303d" />
    <circle cx="32" cy="43" r="20" fill="none" stroke="#ecdfe6" strokeWidth="6" />
    <circle cx="33" cy="43" r="9.500" fill="none" stroke="#ecdfe6" strokeWidth="5" />
    <path d="M36 40l14-10" stroke="#d0a040" strokeWidth="3" />
    <path fill="#4aa0c4" d="M45 36c-2-7 2-13 13-18L68 4c3-4 5-4 5 1v8l9-8-4 10c10 0 11 6 3 8l-13 2c-6 8-13 12-23 11z" />
  </Glyph>
);
const Meditator = () => (
  <Glyph $w={75} $h={69} viewBox="0 0 75 69">
    <path d="M28 31c-8 2-9 12-13 19L4 55M47 31c8 2 9 12 13 19l11 5" fill="none" stroke="#f0b92e" strokeWidth="7" strokeLinecap="round" strokeLinejoin="round" />
    <path fill="#b9b9bd" d="M27 29c5-3 16-3 21 0l1 9-2 21H28l-2-21z" />
    <path fill="#d9a11f" d="M4 65c-1-6 12-8 33-6 21-2 35 0 34 6-4 6-60 5-67 0z" />
    <path fill="#fbc93c" d="M8 60c8-3 26-1 36 6-8 4-33 5-38 0zM67 60c-8-3-20-1-26 4 8 5 24 4 28 0z" />
    <path fill="#f3bd2f" d="M33 21h9v8c-2 4-7 4-9 0z" />
    <ellipse cx="37.500" cy="14" rx="9.500" ry="11.500" fill="#fbcb3f" />
    <path fill="#e2a92a" d="M26.500 13C25 2 31 0 38 0s13 4 11 13c-3-1-2-5-5-6-6 2-12 0-14 1-1 2-1 4-3.500 5z" />
    <path fill="#fff0b8" d="M31 3c4-3 9-3 13 0-3 3-9 3-13 0z" />
    <path d="M32 14h4M40 14h4M36 19h4" stroke="#8a5a1a" strokeWidth="1.300" />
  </Glyph>
);

const HABITS = [
  { name: "Morning Meditation", time: "6:00 AM", days: 14, done: true },
  { name: "Gratitude Journal", time: "9:00 PM", days: 21, done: true },
  { name: "Read for 30 mins", time: "8:00 PM", days: 7, done: false },
  { name: "Nature Walk", time: "5:00 PM", days: 3, done: false },
];
const ACHIEVEMENTS = [
  { icon: <Trophy />, top: 2, name: "Goal Crusher", note: "10 goals completed" },
  { icon: <Flame w={71} h={90} />, top: 2, name: "30 Day Streak", note: "Meditation master" },
  { icon: <Books />, top: 5, name: "Bookworm", note: "50 books read" },
  { icon: <Dart />, top: 15, name: "Locked", note: "Complete 5 more goals", locked: true },
];

export default function App() {
  const progress = 85;
  return (
    <>
      <GlobalStyle />
      <Desktop>
        <MenuBar>
          <AppleLogo />
          {MENU.map(([t, w], i) => <MenuItem key={t} $w={w} $bold={i === 0}>{t}</MenuItem>)}
          <StatusArea>
            {STATUS.map(([gap, w, node], i) => <Status key={i} $gap={gap} $w={w}>{node}</Status>)}
            <Status $gap={31} $w={137}>Thu Aug 21</Status>
            <Status $gap={21} $w={70}>16:28</Status>
          </StatusArea>
        </MenuBar>

        <TabStrip>
          <Lights><Light $c="#ed6a5e" /><Light $c="#33413f" /><Light $c="#61c554" /></Lights>
          {[...WIDE_TABS].map((k, i) => <Tab key={i} $w={64}>{ICONS[k]()}</Tab>)}
          {[...NARROW_TABS].map((k, i) => <Tab key={i} $w={62} $last={i === NARROW_TABS.length - 1}>{ICONS[k]()}</Tab>)}
          <ActiveTab><Glyph $w={16} viewBox="0 0 16 16"><path {...line} d="M1.500 1.500l13 13M14.500 1.500l-13 13" /></Glyph></ActiveTab>
          <NewTab><Glyph $w={20} viewBox="0 0 20 20"><path {...line} strokeWidth={2.800} strokeLinecap="butt" d="M10 0v20M0 10h20" /></Glyph></NewTab>
          <TabSearch><Glyph $w={16} $h={10} viewBox="0 0 16 10"><path {...line} strokeWidth={3} d="M2 2l6 6 6-6" /></Glyph></TabSearch>
        </TabStrip>

        <Chrome>
          <ChromeBody>
            <Toolbar>
              <NavButtons>
                <Glyph $w={32} viewBox="0 0 32 32"><path {...line} strokeWidth={2.800} strokeLinecap="butt" strokeLinejoin="miter" d="M28 16H5M16 4.500L4.500 16 16 27.500" /></Glyph>
                <Glyph $w={32} viewBox="0 0 32 32" opacity="0.450"><path {...line} strokeWidth={2.800} strokeLinecap="butt" strokeLinejoin="miter" d="M4 16h23M16 4.500L27.500 16 16 27.500" /></Glyph>
                <Slot $w={38}><MdRefresh /></Slot>
                <Glyph $w={28} viewBox="0 0 28 28"><path {...line} strokeWidth={2.800} strokeLinecap="butt" strokeLinejoin="miter" d="M3 11L14 2l11 9v15.500h-7.500V17h-7v9.500H3z" /></Glyph>
              </NavButtons>
              <Omnibox>
                <SiteChip>
                  <Glyph $w={25} viewBox="0 0 25 25"><g {...line} strokeWidth={2.800}><circle cx="5" cy="6" r="3.300" /><path d="M13 6h10M2 19h9" /><circle cx="20" cy="19" r="3.300" /></g></Glyph>
                </SiteChip>
                <Url>https://<b>wisdom-site-deployment-c9p1zllbx-axaiinovation.vercel.app</b>/goals</Url>
                <Slot $w={37}><MdStarBorder /></Slot>
              </Omnibox>
              <Extensions>
                <ExtCell><Cone /></ExtCell>
                <ExtCell><Tile $bg="#ee7d2e"><Slot $w={28}><SiHubspot /></Slot></Tile><Count>1</Count></ExtCell>
                <ExtCell><Keys slash /></ExtCell>
                <ExtCell><Robot /></ExtCell>
                <ExtCell><Gauge /></ExtCell>
                <ExtCell><Fox /></ExtCell>
                <ExtCell><Tile $bg="#47464a"><Slot $w={25}><SiOpenai /></Slot></Tile></ExtCell>
                <ExtCell><OnePassword /></ExtCell>
                <ExtCell><Acrobat /></ExtCell>
                <ExtCell><Slot $w={37} $c="#b9cdc9"><MdOutlineExtension /></Slot></ExtCell>
              </Extensions>
              <Rule $ml={34} $mr={18} />
              <Profile><Avatar>P</Avatar>Work</Profile>
              <MoreDots><i /><i /><i /></MoreDots>
            </Toolbar>
            <Bookmarks>
              <Glyph $w={28} viewBox="0 0 28 28"><g fill="none" stroke="currentColor" strokeWidth="3"><path d="M1.500 1.500h9v9h-9zM17.500 1.500h9v9h-9zM1.500 17.500h9v9h-9zM17.500 17.500h9v9h-9z" /></g></Glyph>
              <Rule $ml={30} $mr={16} />
              <BookmarkList>
                {BOOKMARKS.map(([w, icon, label], i) => (
                  <Bookmark key={label} $w={w} $on={i === 0}><IconBox>{icon}</IconBox>{label}</Bookmark>
                ))}
              </BookmarkList>
              <Overflow><Glyph $w={20} viewBox="0 0 20 20"><path {...line} strokeWidth={2.800} strokeLinecap="butt" strokeLinejoin="miter" d="M1 1.500L9 10 1 18.500M10 1.500L18 10l-8 8.500" /></Glyph></Overflow>
              <Rule $ml={34} $mr={32} />
              <AllBookmarks>
                <Glyph $w={32} $h={25} viewBox="0 0 32 25"><path {...line} strokeWidth={3} d="M2 3.500a2 2 0 0 1 2-2h8l4 4h12a2 2 0 0 1 2 2v14a2 2 0 0 1-2 2H4a2 2 0 0 1-2-2z" /></Glyph>
                All Bookmarks
              </AllBookmarks>
            </Bookmarks>
          </ChromeBody>
        </Chrome>

        <Page>
          <PageHeader>
            <div>
              <PageTitle>Goals &amp; Habits</PageTitle>
              <Lead>Track your progress towards wisdom and growth</Lead>
            </div>
            <NewGoal>+ New Goal</NewGoal>
          </PageHeader>

          <Panel $mb={80}>
            <PanelTitle>{"Today\\'s Habits"}</PanelTitle>
            <FourCols>
              {HABITS.map((h) => (
                <Habit key={h.name} $done={h.done}>
                  <Spread $mb={20}>
                    <span>{h.name}</span>
                    <Check $on={h.done}>
                      {h.done && <Glyph $w={50} viewBox="0 0 50 50"><path d="M10.500 28l9 8.500L38 11.500" fill="none" stroke="#fff" strokeWidth="7.500" /></Glyph>}
                    </Check>
                  </Spread>
                  <Spread>
                    <Small>{h.time}</Small>
                    <Streak><Flame w={27} h={35} /> {h.days} days</Streak>
                  </Spread>
                </Habit>
              ))}
            </FourCols>
          </Panel>

          <Filters>
            {["All Goals", "Mindfulness", "Learning", "Reflection", "Health"].map((f) => (
              <Filter key={f} $on={f === "Mindfulness"}>{f}</Filter>
            ))}
          </Filters>

          <Panel $w={1850} $mb={80}>
            <GoalHead>
              <GoalIdentity>
                <GoalIcon><Meditator /></GoalIcon>
                <Stack>
                  <GoalTitle>Daily Meditation Practice</GoalTitle>
                  <Small>Due: 8/30/2024</Small>
                </Stack>
              </GoalIdentity>
              <Pill>On Track</Pill>
            </GoalHead>
            <Spread $mb={20}><Small>26 days</Small><Small>30 days</Small></Spread>
            <Track><Fill style={{ width: `${progress}%` }} /></Track>
            <Percent><b>{progress}%</b><Small>Complete</Small></Percent>
            <Actions>
              <Action $bg="rgba(55, 165, 205, 0.26)" $c="#4bd5ee">Update Progress</Action>
              <Action $bg="rgba(160, 70, 255, 0.17)" $c="#b77cfb">View Details</Action>
            </Actions>
          </Panel>

          <Panel>
            <PanelTitle>Recent Achievements</PanelTitle>
            <FourCols>
              {ACHIEVEMENTS.map((a) => (
                <Achievement key={a.name} $locked={a.locked}>
                  <Medal $top={a.top}>{a.icon}</Medal>
                  <span>{a.name}</span>
                  <Small>{a.note}</Small>
                </Achievement>
              ))}
            </FourCols>
          </Panel>
        </Page>
      </Desktop>
    </>
  );
}
